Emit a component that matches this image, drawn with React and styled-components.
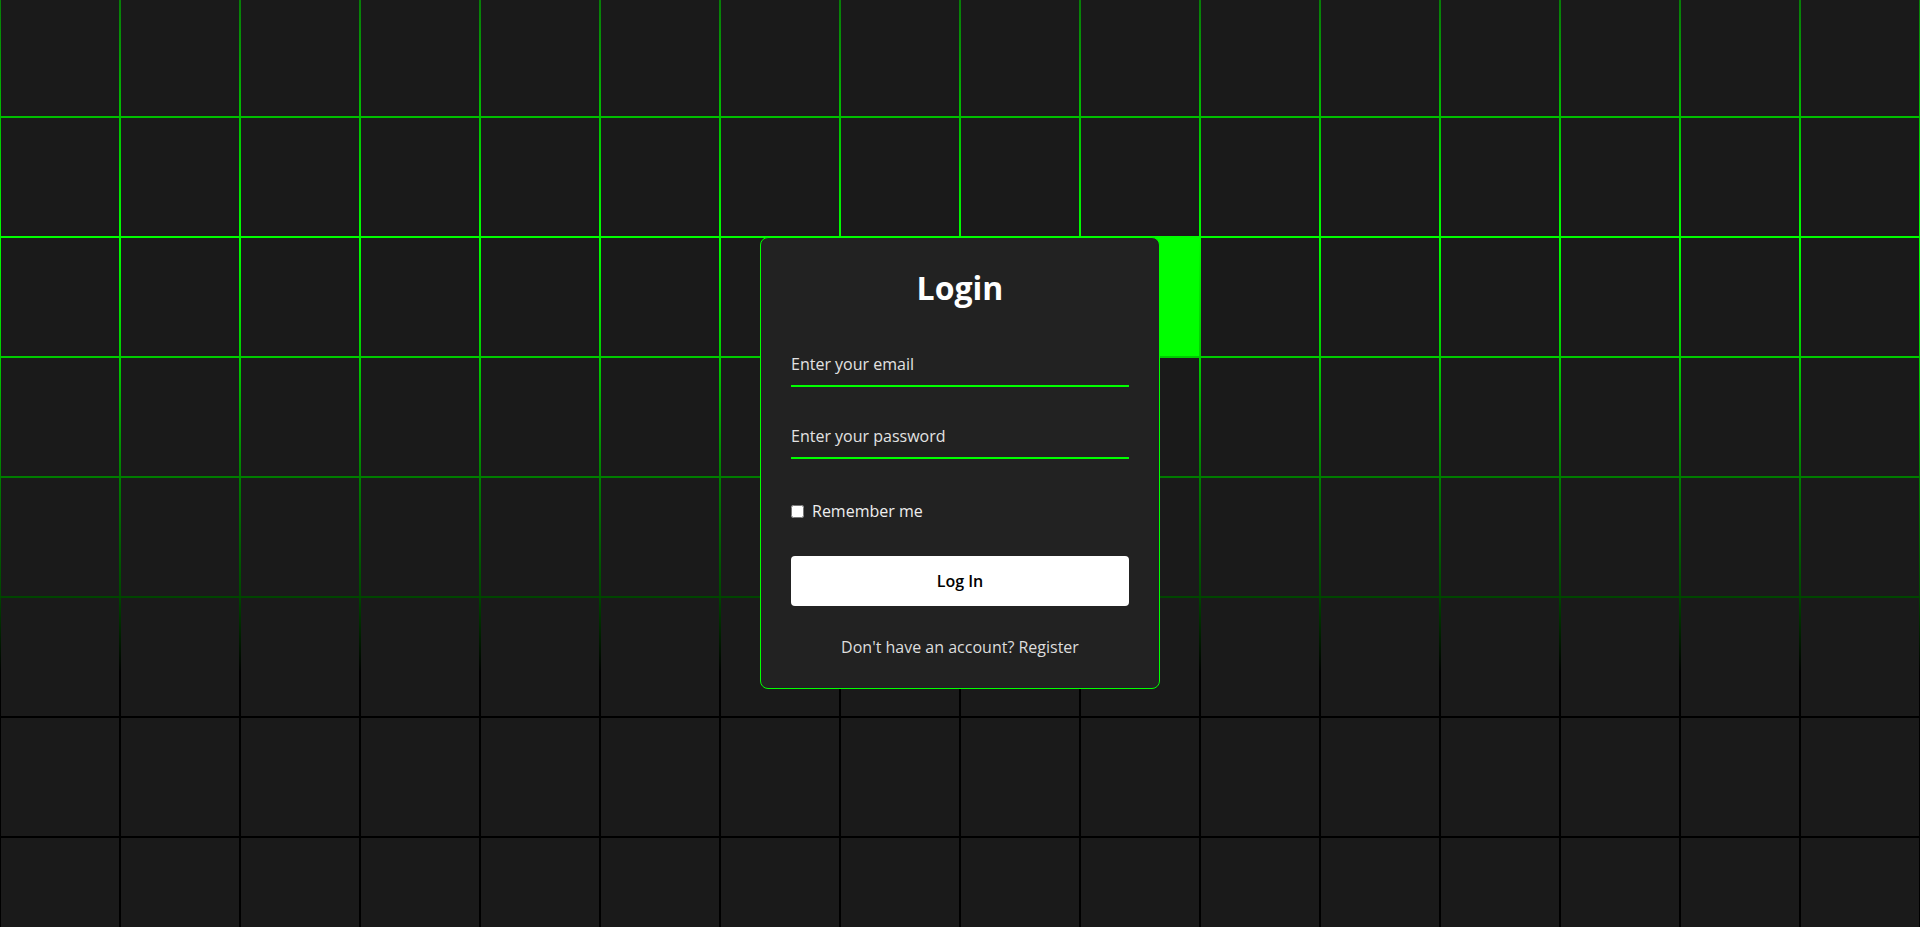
import React from "react";
import styled, { createGlobalStyle } from "styled-components";

const GlobalStyle = createGlobalStyle`
  html, body {
    margin: 0;
    padding: 0;
    background: #1a1a1a;
    font-family: "Open Sans", "Noto Sans", sans-serif;
  }
  * { box-sizing: border-box; }
`;

const Page = styled.div`
  position: relative;
  width: 100vw;
  height: 100vh;
  overflow: hidden;
  background: #1a1a1a;
`;

const Grid = styled.div`
  display: grid;
  grid-template-columns: repeat(16, 120px);
  grid-auto-rows: 120px;
  margin-top: -3px;
  background: linear-gradient(
    to bottom,
    rgb(8, 122, 8) 0px,
    rgb(0, 190, 0) 119px,
    #00ff00 240px,
    rgb(0, 205, 0) 359px,
    rgb(0, 125, 0) 479px,
    rgb(0, 70, 0) 599px,
    #000 675px,
    #000 100%
  );
`;

const Cell = styled.div`
  margin: 1px;
  background: ${(p) => (p.$lit ? "#00ff00" : "#1a1a1a")};
`;

const Card = styled.form`
  position: absolute;
  top: calc(50% - 226.5px);
  left: calc(50% - 200px);
  width: 400px;
  padding: 30px;
  background: #222222;
  border: 1px solid #00ff00;
  border-radius: 8px;
  display: flex;
  flex-direction: column;
`;

const Title = styled.h2`
  margin: 0 0 35px;
  color: #ffffff;
  font-size: 32px;
  font-weight: 700;
  text-align: center;
  line-height: 40px;
`;

const Field = styled.input`
  display: block;
  width: 100%;
  margin: 0 0 ${(p) => p.$gap}px;
  padding: 10px 0;
  height: 44px;
  background: transparent;
  border: none;
  border-bottom: 2px solid #00ff00;
  outline: none;
  color: #ffffff;
  font-family: "Open Sans", sans-serif;
  font-size: 16px;
  line-height: 22px;
  &::placeholder {
    color: #e2e2e2;
    opacity: 1;
  }
`;

const RememberRow = styled.label`
  display: flex;
  align-items: center;
  gap: 8px;
  height: 22px;
  margin-bottom: 34px;
  color: #eeeeee;
  font-size: 16px;
`;

const Checkbox = styled.input`
  margin: 0;
  width: 13px;
  height: 13px;
`;

const SubmitButton = styled.button`
  height: 50px;
  margin-bottom: 30px;
  border: none;
  border-radius: 4px;
  background: #ffffff;
  color: #000000;
  font-family: "Open Sans", sans-serif;
  font-size: 16px;
  font-weight: 600;
  cursor: pointer;
`;

const Footer = styled.p`
  margin: 0;
  color: #dddddd;
  font-size: 16px;
  line-height: 22px;
  text-align: center;
`;

const RegisterLink = styled.a`
  color: inherit;
  text-decoration: none;
`;

const ROWS = 8;
const COLS = 16;

export default function App() {
  const cells = [];
  for (let r = 0; r < ROWS; r++) {
    for (let c = 0; c < COLS; c++) {
      cells.push(<Cell key={`${r}-${c}`} $lit={r === 2 && c === 9} />);
    }
  }
  return (
    <Page>
      <GlobalStyle />
      <Grid>{cells}</Grid>
      <Card onSubmit={(e) => e.preventDefault()}>
        <Title>Login</Title>
        <Field type="email" placeholder="Enter your email" $gap={28} />
        <Field type="password" placeholder="Enter your password" $gap={41} />
        <RememberRow>
          <Checkbox type="checkbox" />
          Remember me
        </RememberRow>
        <SubmitButton type="submit">Log In</SubmitButton>
        <Footer>
          Don't have an account? <RegisterLink href="#">Register</RegisterLink>
        </Footer>
      </Card>
    </Page>
  );
}
